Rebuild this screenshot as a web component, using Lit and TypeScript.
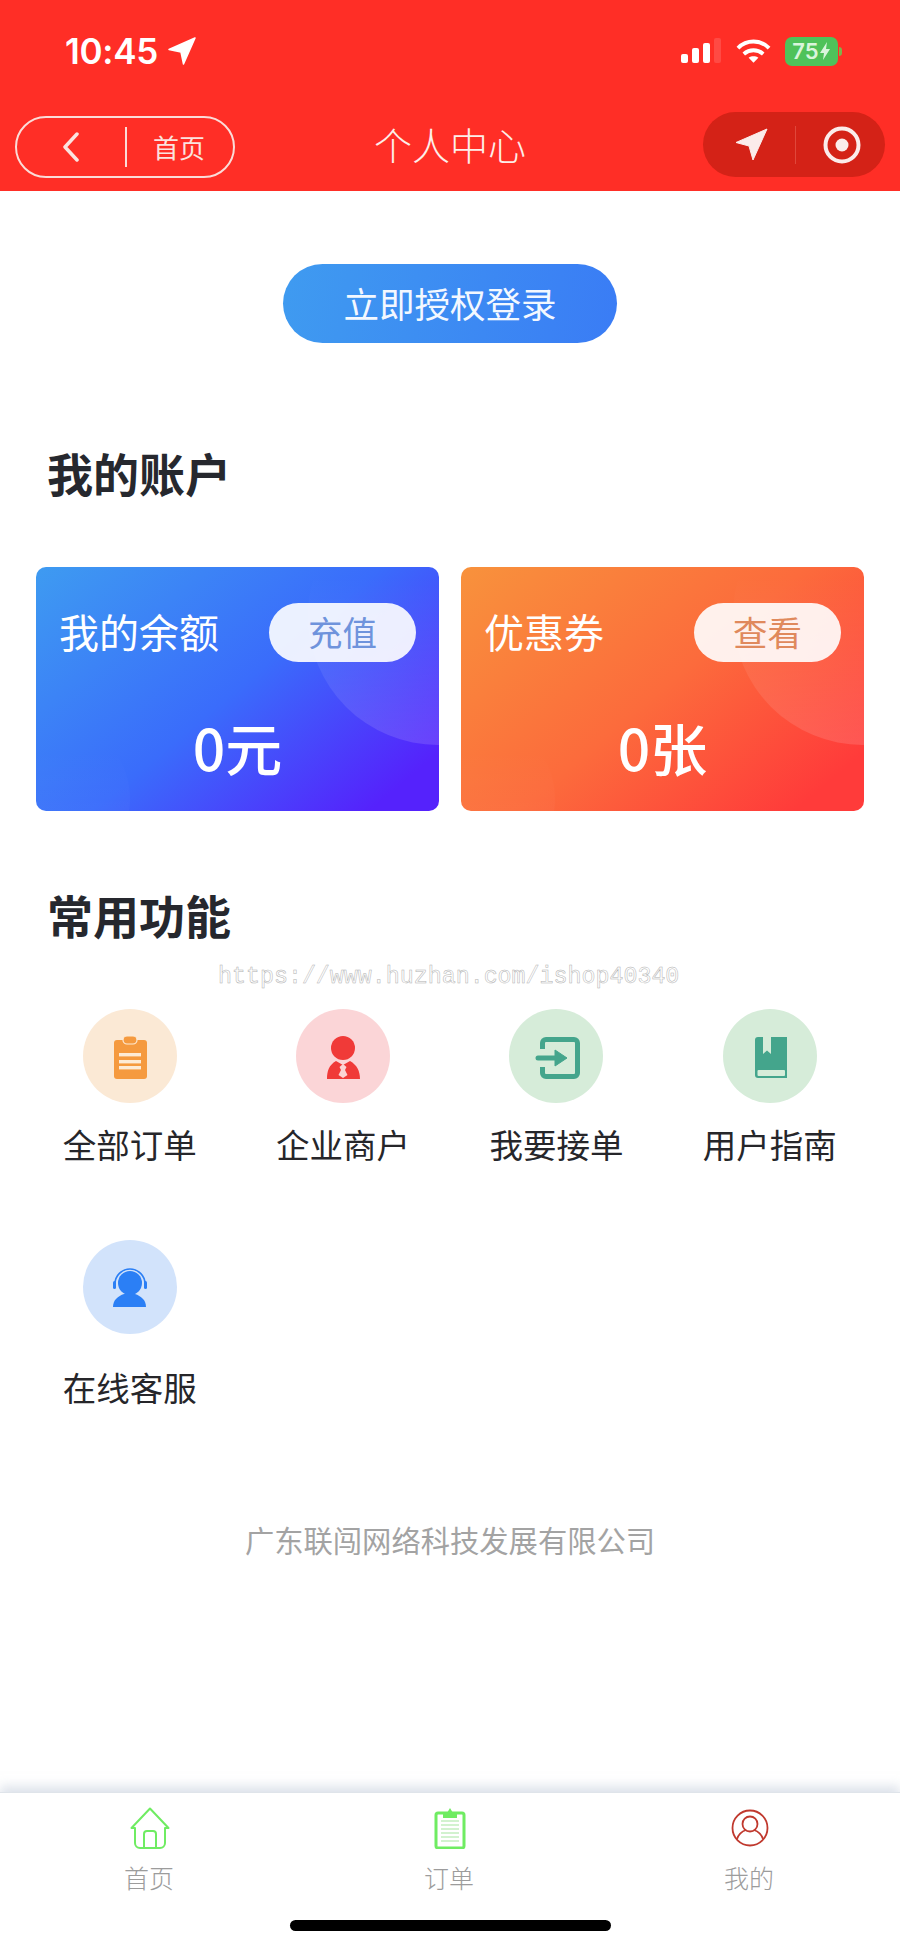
import { LitElement, html, css, svg } from 'lit';
import { customElement } from 'lit/decorators.js';

const ICONS = {
  clipboard: svg`
    <rect x="31" y="31" width="33" height="39" rx="3" fill="#f59a3f"/>
    <rect x="40" y="27" width="14" height="8" rx="4" fill="#f59a3f" stroke="#fdebd6" stroke-width="1.2"/>
    <rect x="36" y="44" width="22" height="3.400" fill="#fdebd6"/>
    <rect x="36" y="51" width="22" height="3.400" fill="#fdebd6"/>
    <rect x="36" y="57" width="22" height="3.400" fill="#fdebd6"/>`,
  merchant: svg`
    <circle cx="47" cy="39" r="12" fill="#f03a38"/>
    <path d="M31 70c0-8 2-14 9-18l7 4 7-4c7 4 10 10 10 18z" fill="#f03a38"/>
    <path d="M47 55l3.500 3-1.500 3 2.500 5-4.500 3-4.500-3 2.500-5-1.500-3z" fill="#fbd4d4"/>`,
  login: svg`
    <path d="M33.500 40v-6a3.500 3.500 0 0 1 3.500-3.500h28a3.500 3.500 0 0 1 3.500 3.500v30a3.500 3.500 0 0 1-3.500 3.500h-28a3.500 3.500 0 0 1-3.500-3.500v-6" fill="none" stroke="#44a58c" stroke-width="5"/>
    <path d="M29 49h20" stroke="#44a58c" stroke-width="5" stroke-linecap="round"/>
    <path d="M46 41l12 8-12 8z" fill="#44a58c" stroke="#44a58c" stroke-linejoin="round"/>`,
  book: svg`
    <path d="M35 28h29v41H35a3 3 0 0 1-3-3V31a3 3 0 0 1 3-3z" fill="#44a58c"/>
    <path d="M40 28h8v17l-4-3.500L40 45z" fill="#d6ecd9"/>
    <rect x="34.500" y="61" width="27.500" height="6" rx="1" fill="#d6ecd9"/>`,
  headset: svg`
    <circle cx="47" cy="43" r="12" fill="#2b7ff5"/>
    <path d="M30 67c0-7 5-11 11-13h11c6 2 11 6 11 13z" fill="#2b7ff5"/>
    <path d="M32 44a15 15 0 0 1 30 0" fill="none" stroke="#2b7ff5" stroke-width="1.600"/>
    <rect x="30" y="41" width="3" height="8" rx="1.500" fill="#2b7ff5"/>
    <rect x="61" y="41" width="3" height="8" rx="1.500" fill="#2b7ff5"/>`,
};

const FEATURES = [
  { label: '全部订单', tint: '#fbe9d5', icon: ICONS.clipboard },
  { label: '企业商户', tint: '#fbd5d7', icon: ICONS.merchant },
  { label: '我要接单', tint: '#d6ecd9', icon: ICONS.login },
  { label: '用户指南', tint: '#d6ecd9', icon: ICONS.book },
  { label: '在线客服', tint: '#d2e3fb', icon: ICONS.headset },
];

const TABS = [
  {
    label: '首页',
    icon: svg`<svg width="40" height="42" viewBox="0 0 40 42" fill="none" stroke="#6fec62" stroke-width="2" stroke-linejoin="round">
      <path d="M1.500 21L20 1.500 38.500 21h-3.500v15a5 5 0 0 1-5 5H10a5 5 0 0 1-5-5V21z"/>
      <path d="M14 41V27a3 3 0 0 1 3-3h6a3 3 0 0 1 3 3v14"/></svg>`,
  },
  {
    label: '订单',
    icon: svg`<svg width="32" height="42" viewBox="0 0 32 42" fill="none">
      <rect x="2" y="6" width="28" height="35" rx="2" stroke="#6fec62" stroke-width="3"/>
      <path d="M9 11V6h4l3-5 3 5h4v5z" fill="#6fec62"/>
      <path d="M7 14h18M7 18h18M7 22h18M7 26h18M7 30h18M7 34h18" stroke="#a6e69f" stroke-width="1.200"/></svg>`,
  },
  {
    label: '我的',
    icon: svg`<svg width="38" height="38" viewBox="0 0 38 38" fill="none" stroke="#c0392e" stroke-width="1.800">
      <circle cx="19" cy="19" r="17.500"/>
      <circle cx="19" cy="15" r="7.500"/>
      <path d="M6 30c2-6 6-8 9-9M32 30c-2-6-6-8-9-9"/></svg>`,
  },
];

@customElement('app-root')
export class AppRoot extends LitElement {
  static override styles = css`
    :host {
      display: block;
      font-family: 'Noto Sans CJK SC', sans-serif;
    }
    .page {
      position: relative;
      display: flex;
      flex-direction: column;
      height: 1947px;
      background: #fff;
      overflow: hidden;
    }
    header {
      height: 191px;
      background: #ff2e26;
      color: #fff;
      flex: none;
    }
    .status {
      display: flex;
      align-items: center;
      height: 50px;
      padding: 26px 62px 0 65px;
    }
    .time {
      font: 600 35px/50px Inter, sans-serif;
      letter-spacing: -0.3px;
      color: #fff;
    }
    .time-arrow {
      margin-left: 10px;
    }
    .status-right {
      display: flex;
      align-items: center;
      gap: 14px;
      margin-left: auto;
    }
    .battery {
      display: flex;
      align-items: center;
      justify-content: center;
      width: 53px;
      height: 29px;
      border-radius: 7px;
      background: #4fc25a;
      font: 600 22px/29px Inter, sans-serif;
      color: #d9f5dc;
      position: relative;
    }
    .battery::after {
      content: '';
      position: absolute;
      left: 54px;
      top: 10px;
      width: 3px;
      height: 9px;
      border-radius: 0 3px 3px 0;
      background: #7fb24a;
    }
    .nav {
      position: relative;
      display: flex;
      align-items: center;
      justify-content: space-between;
      height: 65px;
      padding: 0 15px;
      margin-top: 36px;
    }
    .back {
      display: flex;
      align-items: center;
      width: 220px;
      height: 62px;
      margin-top: 4px;
      box-sizing: border-box;
      border: 2px solid #fbdcd8;
      border-radius: 31px;
    }
    .back svg {
      margin-left: 45px;
    }
    .back i {
      width: 2px;
      height: 40px;
      background: #fbdcd8;
      margin-left: 45px;
    }
    .back span {
      margin-left: 26px;
      font-size: 26px;
      line-height: 40px;
      color: #fbe3df;
    }
    .title {
      position: absolute;
      left: 0;
      right: 0;
      margin-top: -2px;
      text-align: center;
      font-size: 38px;
      line-height: 50px;
      font-weight: 300;
      color: #fdeee9;
    }
    .capsule {
      display: flex;
      align-items: center;
      width: 182px;
      height: 65px;
      border-radius: 33px;
      background: #d42217;
    }
    .capsule .arrow {
      margin-left: 32px;
    }
    .capsule i {
      width: 1px;
      height: 38px;
      background: #e0473b;
      margin-left: 27px;
    }
    .capsule .target {
      margin-left: 27px;
    }
    main {
      flex: 1;
    }
    .login {
      width: 334px;
      height: 79px;
      margin: 73px auto 0;
      border-radius: 40px;
      background: linear-gradient(100deg, #3f9bf0, #3a7cf5);
      color: #f3f8ff;
      font-size: 35.500px;
      line-height: 77px;
      text-align: center;
      font-weight: 400;
    }
    h2 {
      margin: 0;
      padding-left: 47px;
      font-size: 46px;
      line-height: 60px;
      font-weight: 700;
      color: #26282e;
    }
    .account-title {
      margin-top: 99px;
    }
    .cards {
      display: flex;
      gap: 22px;
      margin: 65px 36px 0;
    }
    .card {
      position: relative;
      flex: 1;
      height: 244px;
      border-radius: 10px;
      overflow: hidden;
      color: #fff;
    }
    .card.blue {
      background: linear-gradient(140deg, #3e9bf1 0%, #3a6cfb 50%, #5522fc 90%);
    }
    .card.orange {
      background: linear-gradient(140deg, #f8923c 0%, #fc6b3c 50%, #ff3b3a 90%);
    }
    .card .bubble {
      position: absolute;
      left: 272px;
      top: -82px;
      width: 260px;
      height: 260px;
      border-radius: 50%;
      background: linear-gradient(180deg, rgba(255, 255, 255, 0) 35%, rgba(255, 255, 255, 0.13) 100%);
    }
    .card .bubble-low {
      position: absolute;
      left: -70px;
      top: 150px;
      width: 164px;
      height: 164px;
      border-radius: 50%;
      background: linear-gradient(180deg, rgba(255, 255, 255, 0) 20%, rgba(255, 255, 255, 0.06) 100%);
    }
    .card-row {
      position: relative;
      display: flex;
      align-items: center;
      justify-content: space-between;
      height: 59px;
      margin-top: 36px;
      padding: 0 23px 0 23px;
    }
    .card-label {
      font-size: 40px;
      line-height: 55px;
      margin-top: -3px;
      font-weight: 400;
    }
    .pill {
      width: 147px;
      height: 59px;
      border-radius: 30px;
      background: rgba(255, 255, 255, 0.9);
      font-size: 34.500px;
      line-height: 57px;
      text-align: center;
      font-weight: 400;
    }
    .blue .pill {
      color: #6f93dc;
    }
    .orange .pill {
      color: #e0895c;
    }
    .value {
      position: relative;
      margin-top: 49px;
      text-align: center;
      font-size: 57px;
      line-height: 70px;
      font-weight: 500;
    }
    .feature-title {
      margin-top: 73px;
    }
    .grid {
      display: grid;
      grid-template-columns: repeat(4, 213.400px);
      row-gap: 73px;
      margin: 65px 0 0 23px;
    }
    .feature {
      display: flex;
      flex-direction: column;
      align-items: center;
      gap: 18px;
    }
    .feature:nth-child(5) {
      gap: 30px;
    }
    .dot {
      width: 94px;
      height: 94px;
      border-radius: 50%;
    }
    .dot svg {
      display: block;
    }
    .feature span {
      font-size: 33.500px;
      line-height: 46px;
      font-weight: 400;
      color: #26262a;
    }
    .company {
      margin-top: 109px;
      text-align: center;
      font-size: 29.300px;
      line-height: 40px;
      font-weight: 400;
      color: #a3a3a3;
    }
    footer {
      flex: none;
      height: 155px;
      box-sizing: border-box;
      border-top: 1px solid #dfe4ea;
      box-shadow: 0 -6px 10px rgba(190, 200, 215, 0.5);
      background: #fff;
      position: relative;
    }
    .tabs {
      display: grid;
      grid-template-columns: 300px 300px 300px;
      padding-top: 14px;
    }
    .tab {
      display: flex;
      flex-direction: column;
      align-items: center;
    }
    .tab .tab-icon {
      display: flex;
      align-items: center;
      justify-content: center;
      height: 42px;
    }
    .tab span {
      margin: 10px 2px 0 0;
      font-size: 25px;
      line-height: 36px;
      font-weight: 300;
      color: #9c9c9c;
    }
    .home-bar {
      width: 321px;
      height: 11px;
      margin: 25px auto 0;
      border-radius: 6px;
      background: #000;
    }
    .watermark {
      position: absolute;
      left: 218px;
      top: 962px;
      font: 23.300px/30px 'Liberation Mono', monospace;
      color: #fff;
      -webkit-text-stroke: 0.500px #b0b0b0;
      white-space: nowrap;
    }
  `;

  private renderCard(kind: string, label: string, action: string, value: string) {
    return html`
      <div class="card ${kind}">
        <div class="bubble"></div>
        <div class="bubble-low"></div>
        <div class="card-row">
          <div class="card-label">${label}</div>
          <div class="pill">${action}</div>
        </div>
        <div class="value">${value}</div>
      </div>
    `;
  }

  override render() {
    return html`
      <div class="page">
        <header>
          <div class="status">
            <span class="time">10:45</span>
            <svg class="time-arrow" width="28" height="28" viewBox="0 0 28 28">
              <path d="M27 1L1 12.500l12 2.500 2.500 12z" fill="#fff" stroke="#fff" stroke-width="1.500" stroke-linejoin="round"/>
            </svg>
            <div class="status-right">
              <svg width="41" height="26" viewBox="0 0 41 26">
                <rect x="0" y="16" width="7" height="9" rx="2" fill="#fff"/>
                <rect x="11" y="10" width="7" height="15" rx="2" fill="#fff"/>
                <rect x="22" y="5" width="7" height="20" rx="2" fill="#fff"/>
                <rect x="33" y="0" width="7" height="25" rx="2" fill="#ff4a44"/>
              </svg>
              <svg width="35" height="26" viewBox="0 0 36 26" fill="none" stroke="#fff" stroke-width="4">
                <path d="M2 10c9-9 23-9 32 0"/>
                <path d="M8 16c6-5 14-5 20 0"/>
                <path d="M18 25l-5-5c3-2 7-2 10 0z" fill="#fff" stroke="none"/>
              </svg>
              <div class="battery">75<svg width="12" height="20" viewBox="0 0 12 20"><path d="M8 1L1 12h4l-1 7 7-11H7z" fill="#d9f5dc"/></svg></div>
            </div>
          </div>
          <div class="nav">
            <div class="title">个人中心</div>
            <div class="back">
              <svg width="18" height="30" viewBox="0 0 18 30" fill="none" stroke="#fbe3df" stroke-width="3.500" stroke-linecap="round" stroke-linejoin="round">
                <path d="M15 2L3 15l12 13"/>
              </svg>
              <i></i>
              <span>首页</span>
            </div>
            <div class="capsule">
              <svg class="arrow" width="33" height="33" viewBox="0 0 33 33">
                <path d="M32 1L1 14.500l13 3.500 4 14z" fill="#fbeceb" stroke="#fbeceb" stroke-linejoin="round"/>
              </svg>
              <i></i>
              <svg class="target" width="38" height="38" viewBox="0 0 38 38">
                <circle cx="19" cy="19" r="16.500" fill="none" stroke="#fbeceb" stroke-width="4"/>
                <circle cx="19" cy="19" r="6.500" fill="#fbeceb"/>
              </svg>
            </div>
          </div>
        </header>
        <main>
          <div class="login">立即授权登录</div>
          <h2 class="account-title">我的账户</h2>
          <div class="cards">
            ${this.renderCard('blue', '我的余额', '充值', '0元')}
            ${this.renderCard('orange', '优惠券', '查看', '0张')}
          </div>
          <h2 class="feature-title">常用功能</h2>
          <div class="grid">
            ${FEATURES.map(
              (item) => html`
                <div class="feature">
                  <div class="dot" style="background:${item.tint}">
                    <svg width="94" height="94" viewBox="0 0 94 94">${item.icon}</svg>
                  </div>
                  <span>${item.label}</span>
                </div>
              `,
            )}
          </div>
          <div class="company">广东联闯网络科技发展有限公司</div>
        </main>
        <footer>
          <div class="tabs">
            ${TABS.map(
              (tab) => html`
                <div class="tab">
                  <div class="tab-icon">${tab.icon}</div>
                  <span>${tab.label}</span>
                </div>
              `,
            )}
          </div>
          <div class="home-bar"></div>
        </footer>
        <div class="watermark">https://www.huzhan.com/ishop40340</div>
      </div>
    `;
  }
}
